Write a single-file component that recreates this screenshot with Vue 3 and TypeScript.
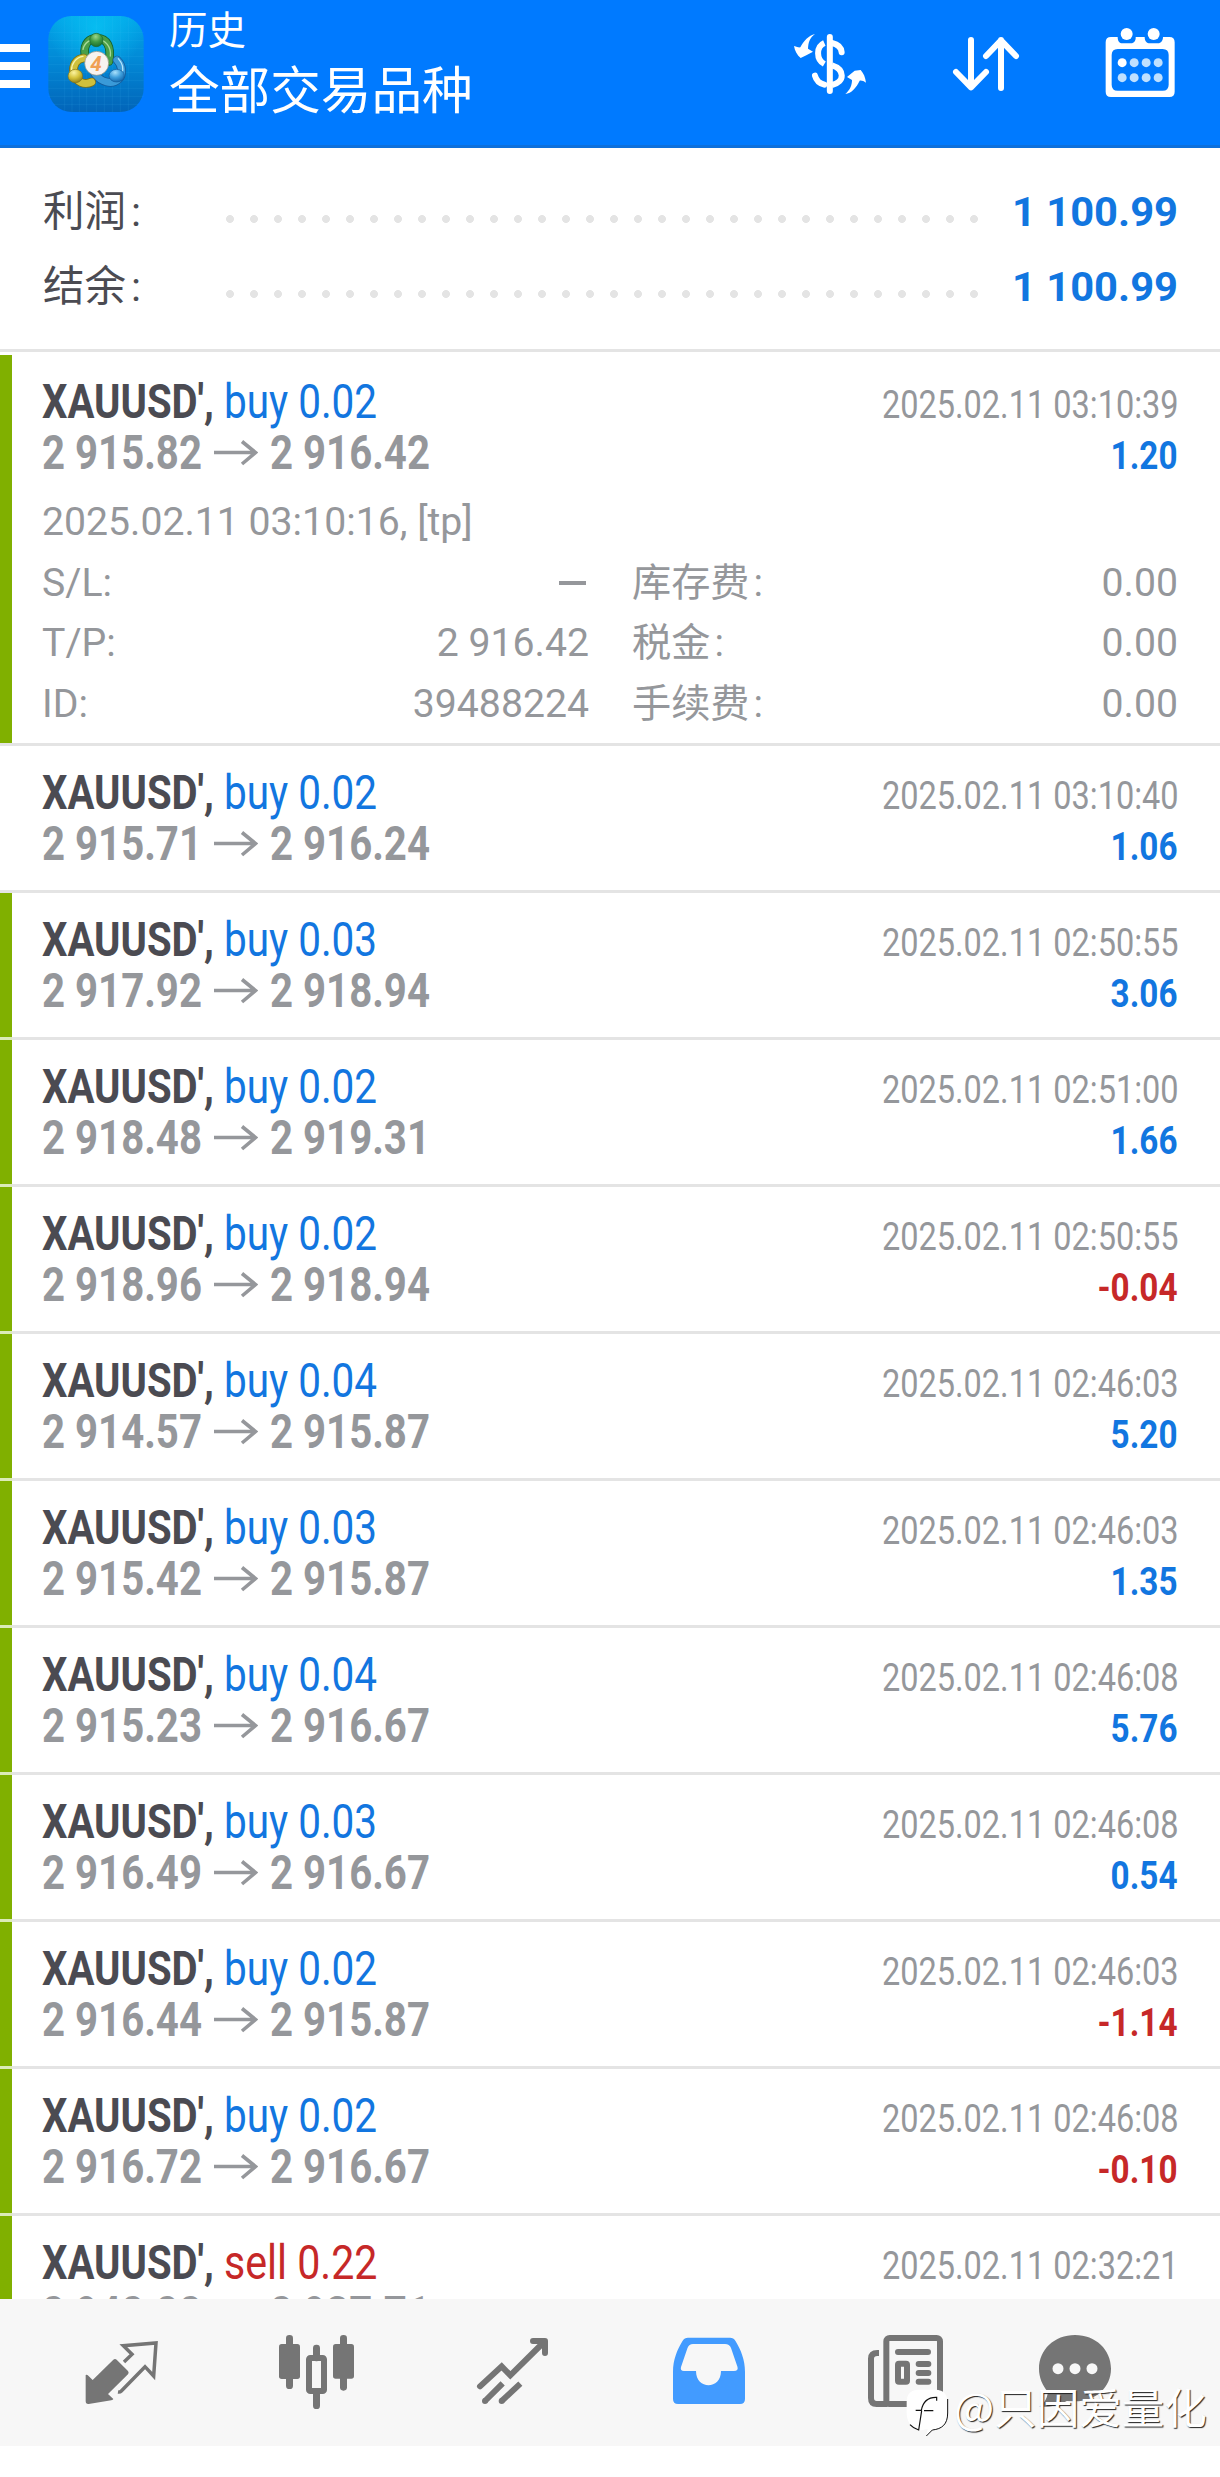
<script setup lang="ts">
interface Deal {
  side: 'buy' | 'sell'
  volume: string
  open: string
  close: string
  time: string
  profit: string
  marked: boolean
  expanded?: boolean
}

const deals: Deal[] = [
  { side: 'buy', volume: '0.02', open: '2 915.82', close: '2 916.42', time: '2025.02.11 03:10:39', profit: '1.20', marked: true, expanded: true },
  { side: 'buy', volume: '0.02', open: '2 915.71', close: '2 916.24', time: '2025.02.11 03:10:40', profit: '1.06', marked: false },
  { side: 'buy', volume: '0.03', open: '2 917.92', close: '2 918.94', time: '2025.02.11 02:50:55', profit: '3.06', marked: true },
  { side: 'buy', volume: '0.02', open: '2 918.48', close: '2 919.31', time: '2025.02.11 02:51:00', profit: '1.66', marked: true },
  { side: 'buy', volume: '0.02', open: '2 918.96', close: '2 918.94', time: '2025.02.11 02:50:55', profit: '-0.04', marked: true },
  { side: 'buy', volume: '0.04', open: '2 914.57', close: '2 915.87', time: '2025.02.11 02:46:03', profit: '5.20', marked: true },
  { side: 'buy', volume: '0.03', open: '2 915.42', close: '2 915.87', time: '2025.02.11 02:46:03', profit: '1.35', marked: true },
  { side: 'buy', volume: '0.04', open: '2 915.23', close: '2 916.67', time: '2025.02.11 02:46:08', profit: '5.76', marked: true },
  { side: 'buy', volume: '0.03', open: '2 916.49', close: '2 916.67', time: '2025.02.11 02:46:08', profit: '0.54', marked: true },
  { side: 'buy', volume: '0.02', open: '2 916.44', close: '2 915.87', time: '2025.02.11 02:46:03', profit: '-1.14', marked: true },
  { side: 'buy', volume: '0.02', open: '2 916.72', close: '2 916.67', time: '2025.02.11 02:46:08', profit: '-0.10', marked: true },
  { side: 'sell', volume: '0.22', open: '2 942.22', close: '2 937.71', time: '2025.02.11 02:32:21', profit: '', marked: true },
]

const summary = [
  { label: '利润', value: '1 100.99' },
  { label: '结余', value: '1 100.99' },
]

const details = [
  [{ label: 'S/L', value: '–' }, { label: '库存费', value: '0.00', cjk: true }],
  [{ label: 'T/P', value: '2 916.42' }, { label: '税金', value: '0.00', cjk: true }],
  [{ label: 'ID', value: '39488224' }, { label: '手续费', value: '0.00', cjk: true }],
]
</script>

<template>
  <div class="screen">
    <header class="bar">
      <div class="menu"><i></i><i></i><i></i></div>
      <svg class="logo" viewBox="53 48 288 288">
        <defs>
          <linearGradient id="bg" x1="0" y1="0" x2="0" y2="1">
            <stop offset="0" stop-color="#02a6e8" /><stop offset=".5" stop-color="#0286d4" /><stop offset="1" stop-color="#0264b8" />
          </linearGradient>
          <radialGradient id="glow" cx=".5" cy=".12" r=".5">
            <stop offset="0" stop-color="#08c4f4" stop-opacity=".8" /><stop offset="1" stop-color="#08c4f4" stop-opacity="0" />
          </radialGradient>
          <radialGradient id="g" cx=".45" cy=".25" r=".8"><stop offset="0" stop-color="#9ad68a" /><stop offset=".5" stop-color="#3f9a45" /><stop offset="1" stop-color="#176a2c" /></radialGradient>
          <radialGradient id="y" cx=".4" cy=".25" r=".8"><stop offset="0" stop-color="#fbf3a0" /><stop offset=".5" stop-color="#d6c43c" /><stop offset="1" stop-color="#8c7c14" /></radialGradient>
          <radialGradient id="b" cx=".4" cy=".25" r=".8"><stop offset="0" stop-color="#a8e0fb" /><stop offset=".5" stop-color="#3f9fdc" /><stop offset="1" stop-color="#0f62a8" /></radialGradient>
        </defs>
        <rect x="54" y="48" width="286" height="288" rx="70" fill="url(#bg)" />
        <rect x="54" y="48" width="286" height="288" rx="70" fill="url(#glow)" />
        <path d="M103 52V332M125 48V336M147 48V336M169 48V336M198 48V336M222 48V336M246 48V336M270 48V336M294 52V332M54 97H340M54 121H340M54 145H340M54 169H340M54 193H340M54 217H340M54 241H340M54 265H340M54 289H340M70 313H324" stroke="#5cd0ff" stroke-opacity=".2" stroke-width="1.5" fill="none" />
        <g stroke-linejoin="round" stroke-linecap="round" fill="none">
          <path d="M164 166C158 128 180 114 200 115C230 115 244 140 236 184" stroke="#14602c" stroke-width="26" />
          <path d="M164 166C158 128 180 114 200 115C230 115 244 140 236 184" stroke="#4a9f48" stroke-width="21" />
          <path d="M158 148C162 128 180 116 200 118C226 118 243 142 240 168" stroke="#a5d999" stroke-width="4" />
          <path d="M260 180C276 196 280 224 264 238C244 256 212 246 194 222" stroke="#145c9c" stroke-width="26" />
          <path d="M260 180C276 196 280 224 264 238C244 256 212 246 194 222" stroke="#3a9ad8" stroke-width="21" />
          <path d="M264 176C278 192 280 210 274 222" stroke="#b4e4fb" stroke-width="4" />
          <path d="M160 174C138 176 126 196 130 220C138 248 164 256 184 246" stroke="#7c7014" stroke-width="26" />
          <path d="M160 174C138 176 126 196 130 220C138 248 164 256 184 246" stroke="#cfc03c" stroke-width="21" />
          <path d="M158 169C136 172 123 192 124 210" stroke="#f8f3ae" stroke-width="4" />
        </g>
        <circle cx="198" cy="120" r="20" fill="url(#g)" stroke="#1b662f" stroke-width="2" />
        <ellipse cx="135" cy="228" rx="22" ry="20" fill="url(#y)" stroke="#80731a" stroke-width="2" />
        <ellipse cx="259" cy="227" rx="23" ry="19" fill="url(#b)" stroke="#145c9c" stroke-width="2" />
        <circle cx="199" cy="190" r="36" fill="#f6f3f0" stroke="#8d8a78" stroke-width="2" />
        <text x="197" y="212" text-anchor="middle" font-family="Roboto, sans-serif" font-size="62" font-weight="700" font-style="italic" fill="#f0a054">4</text>
      </svg>
      <div class="heading">
        <div class="small">历史</div>
        <div class="big">全部交易品种</div>
      </div>
      <div class="actions">
        <svg class="a1" viewBox="90 90 240 210" width="80" height="70">
          <g fill="none" stroke="#fff" stroke-width="18" stroke-linecap="butt">
            <path d="M193 129C168 140 168 178 193 192" />
            <path d="M216 129C234 133 244 144 245 157" stroke-linecap="round" />
            <path d="M216 196C254 208 256 246 216 255" />
            <path d="M193 254C178 250 169 242 165 227" stroke-linecap="round" />
            <path d="M209.500 111V273" stroke-linecap="round" />
          </g>
          <path d="M165 102C149 113 145 128 144 146L159 155L139 166L122 174C112 166 104 152 102 138C111 141 116 143 121 142C131 123 146 106 165 102Z" fill="#fff" />
          <path d="M256 282C270 270 276 256 276 240L261 231L284 212L302 210C311 220 316 232 318 248C311 243 305 241 299 242C289 263 274 280 256 282Z" fill="#fff" />
        </svg>
        <svg class="a2" viewBox="570 90 216 210" width="72" height="70">
          <path d="M633 120V262M588 216L633 262L678 216M723 264V120M678 168L723 121L768 168" fill="none" stroke="#fff" stroke-width="18" stroke-linecap="round" stroke-linejoin="round" />
        </svg>
        <svg class="a3" viewBox="1030 75 222 225" width="74" height="75">
          <path fill-rule="evenodd" d="M1054 111H1074C1074 124 1080 130 1088 130H1114C1123 130 1129 122 1128 111H1155C1155 124 1162 130 1170 130H1195C1204 130 1210 122 1210 111H1229Q1245 111 1245 127V275Q1245 291 1229 291H1054Q1038 291 1038 275V127Q1038 111 1054 111ZM1074 147Q1056 147 1056 165V254Q1056 272 1074 272H1209Q1227 272 1227 254V165Q1227 147 1209 147Z" fill="#fff" />
          <circle cx="1101" cy="102" r="18" fill="#fff" /><circle cx="1182" cy="102" r="18" fill="#fff" />
          <circle cx="1087.500" cy="188" r="13.500" fill="#fff" />
          <g fill="#bfe0ff"><circle v-for="x in [1123.5, 1159.5, 1195.5]" :key="x" :cx="x" cy="188" r="13.500" /><circle v-for="x in [1087.5, 1123.5, 1159.5, 1195.5]" :key="'b' + x" :cx="x" cy="233" r="13.500" /></g>
        </svg>
      </div>
    </header>

    <section class="summary">
      <div v-for="s in summary" :key="s.label" class="sum-row">
        <span class="sum-label">{{ s.label }}<b class="colon">:</b></span>
        <span class="dots"></span>
        <span class="sum-value">{{ s.value }}</span>
      </div>
    </section>

    <main class="list">
      <article v-for="(d, i) in deals" :key="i" class="deal" :class="{ marked: d.marked, first: i === 0, after: i > 0 && d.marked && deals[i - 1].marked }">
        <div class="rule"></div>
        <div class="body">
          <div class="top">
            <div class="left">
              <div class="line"><span class="symbol"><span class="sq-symbol">XAUUSD',</span></span><span class="side" :class="d.side">{{ d.side }} {{ d.volume }}</span></div>
              <div class="line price">
                <span class="open"><span class="sq-price">{{ d.open }}</span></span>
                <svg class="arrow" viewBox="0 0 44 26" width="44" height="26"><path d="M0 12.500H41M28 1.500L41.500 12.500L28 24" fill="none" stroke="#95979b" stroke-width="3.600" /></svg>
                <span class="sq-price">{{ d.close }}</span>
              </div>
            </div>
            <div class="right">
              <div class="time">{{ d.time }}</div>
              <div v-if="d.profit" class="profit" :class="{ loss: d.profit.startsWith('-') }">{{ d.profit }}</div>
            </div>
          </div>
          <div v-if="d.expanded" class="details">
            <div class="detail-time">2025.02.11 03:10:16, [tp]</div>
            <div v-for="(r, k) in details" :key="k" class="detail-row">
              <div v-for="c in r" :key="c.label" class="cell">
                <span class="lab" :class="{ cjk: c.cjk }">{{ c.label }}<i>:</i></span>
                <span v-if="c.value === '–'" class="dash"></span>
                <span v-else class="val">{{ c.value }}</span>
              </div>
            </div>
          </div>
        </div>
      </article>
    </main>

    <nav class="tabs">
      <span><svg viewBox="60 60 252 252">
        <path d="M160 149Q165 145 170 149L204 183Q208 188 204 193L144 252L160 267Q159 270 154 271L86 282Q77 283 77 273V195Q81 193 85 197L98 210Z" fill="#757575" />
        <path d="M192 156L216 133L190 107L288 99L281 198L255 170L184 243Q180 247 174 246" fill="none" stroke="#757575" stroke-width="10.500" />
      </svg></span>
      <span><svg viewBox="648 60 252 252" fill="#757575">
        <rect x="678" y="75" width="21" height="162" rx="10" /><rect x="657" y="102" width="63" height="105" rx="8" />
        <rect x="840" y="75" width="21" height="167" rx="10" /><rect x="819" y="102" width="63" height="104" rx="8" />
        <rect x="759" y="104" width="21" height="50" rx="10" /><rect x="759" y="240" width="21" height="57" rx="10" />
        <rect x="747" y="144" width="45" height="99" rx="4" fill="none" stroke="#757575" stroke-width="18" />
      </svg></span>
      <span><svg viewBox="1236 60 252 252">
        <path d="M1260 229L1325 169L1351 196L1452 96" fill="none" stroke="#757575" stroke-width="18" stroke-linecap="round" stroke-linejoin="miter" />
        <path d="M1419 93H1455V129" fill="none" stroke="#757575" stroke-width="18" stroke-linecap="round" stroke-linejoin="round" />
        <path d="M1275 273L1328 220M1325 273L1381 221" fill="none" stroke="#757575" stroke-width="18" />
        <circle cx="1275" cy="273" r="9" fill="#757575" /><circle cx="1325" cy="273" r="9" fill="#757575" />
      </svg></span>
      <span><svg viewBox="668 2330 84 84">
        <path fill-rule="evenodd" d="M688 2337.700H730Q733.500 2337.700 735.500 2341C741 2350 745 2360 745 2372V2399Q745 2404 740 2404H678Q673 2404 673 2399V2372C673 2360 677 2350 682.500 2341Q684.500 2337.700 688 2337.700ZM693 2344Q689 2344 687.500 2348L681 2367Q680 2371 684 2371H696C696 2390 721 2390 721 2371H734Q738.500 2371 737.500 2367L731 2348Q729.500 2344 725 2344Z" fill="#429bff" />
      </svg></span>
      <span><svg viewBox="42 60 252 252" fill="none" stroke="#757575" stroke-width="18">
        <rect x="109" y="84" width="161" height="198" rx="10" />
        <path d="M87 129H82Q63 129 63 146V264Q63 282 80 282H112" />
        <path d="M144 126H234M206 162H235M206 189H235M206 215H235" stroke-linecap="round" />
        <rect x="144" y="161" width="27" height="54" rx="3" />
      </svg></span>
      <span class="last"><svg viewBox="549 60 252 252">
        <path d="M675 75C737 75 783 119 783 176C783 232 737 274 675 274L650 273C625 288 596 292 568 290C582 280 590 270 594 246C577 226 567 202 567 176C567 119 613 75 675 75Z" fill="#757575" />
        <circle cx="624" cy="176" r="16.500" fill="#f7f7f7" /><circle cx="675" cy="176" r="16.500" fill="#f7f7f7" /><circle cx="726" cy="176" r="16.500" fill="#f7f7f7" />
      </svg></span>
    </nav>

    <div class="watermark">
      <svg viewBox="165 235 135 150" width="45" height="50">
        <path d="M206 363C188 356 171 340 170 312V276C170 252 184 240 206 240H256C282 240 293 256 293 280V310C293 344 276 358 247 361L229 379L233 358Z" fill="#fff" />
        <path d="M293 268V310C293 344 276 358 247 361L229 379" fill="none" stroke="#111" stroke-width="3" />
        <path d="M180 345Q190 356 206 361L215 303M197 302H214C218 280 228 262 260 263V273M222 303H250" fill="none" stroke="#111" stroke-width="3.500" />
      </svg>
      <span>@只因爱量化</span>
    </div>
  </div>
</template>

<style>
body { background: #fff; }
</style>

<style scoped>
.screen { position: relative; width: 1220px; height: 2477px; overflow: hidden; background: #fff; font-family: Roboto, "Noto Sans CJK SC", sans-serif; color: #4b4b52; display: flex; flex-direction: column; }
.bar { box-sizing: border-box; height: 148px; flex: none; background: #007aff; border-bottom: 3px solid #0d70dc; display: flex; align-items: flex-start; color: #fff; }
.menu { width: 30px; margin: 44px 18px 0 0; display: flex; flex-direction: column; gap: 10px; }
.menu i { height: 8px; background: #fff; }
.logo { width: 96px; height: 96px; margin-top: 16px; flex: none; }
.heading { margin: 7px 0 0 25px; font-family: "Noto Sans CJK SC", sans-serif; width: 400px; white-space: nowrap; }
.small { font-size: 38.500px; line-height: 40px; }
.big { font-size: 50.600px; line-height: 60px; margin-top: 10px; }
.actions { display: flex; }
.a1 { margin: 30px 0 0 221px; }
.a2 { margin: 30px 0 0 80px; }
.a3 { margin: 25px 0 0 81px; }

.summary { box-sizing: border-box; height: 204px; flex: none; border-bottom: 3px solid #e4e4e4; padding: 26px 42px 0 43px; }
.sum-row { height: 75px; line-height: 75px; font-size: 41.500px; display: flex; }
.sum-label { width: 175px; }
.colon { font-weight: 400; margin-left: 5px; }
.dots { width: 768px; background: radial-gradient(circle at 12px 45px, #e4e4e4 3.600px, transparent 4.300px) 0 0 / 24px 75px repeat-x; }
.sum-value { flex: 1; display: flex; justify-content: flex-end; font-weight: 700; color: #1276e0; transform: scaleX(1.005); transform-origin: 100% 50%; white-space: nowrap; }

.list { height: 1947px; flex: none; overflow: hidden; }
.rule { height: 3px; background: #e4e4e4; }
.after .rule { background: linear-gradient(to right, #dcebb8 12px, #e4e4e4 12px); }
.first .rule { background: #fff; }
.body { box-sizing: border-box; height: 144px; border-left: 12px solid transparent; padding: 0 41px 0 30px; }
.marked .body { border-left-color: #80b000; }
.first .body { height: 388px; }
.top { display: flex; justify-content: space-between; height: 137px; }
.left { padding-top: 21px; font-size: 48px; line-height: 51px; white-space: nowrap; }
.line { display: flex; height: 51px; }
.symbol { width: 182px; font-weight: 700; }
.sq-symbol { display: inline-block; transform: scaleX(.835); transform-origin: 0 50%; }
.side { display: inline-block; transform: scaleX(.843); transform-origin: 0 50%; color: #1276e0; }
.side.sell { color: #c62828; transform: scaleX(.857); }
.price { font-weight: 700; color: #95979b; }
.open { width: 172px; }
.sq-price { display: inline-block; transform: scaleX(.837); transform-origin: 0 50%; }
.arrow { margin: 13px 12px 0 0; flex: none; }
.right { padding-top: 24px; font-size: 39.400px; line-height: 51px; text-align: right; white-space: nowrap; color: #95979b; }
.time, .profit { transform: scaleX(.825); transform-origin: 100% 50%; }
.profit { font-weight: 700; color: #1276e0; margin-right: 1px; transform: scaleX(.845); }
.profit.loss { color: #c62828; }

.details { font-size: 39.200px; line-height: 60.700px; color: #95979b; white-space: nowrap; }
.detail-row { display: flex; gap: 43px; height: 60.700px; }
.cell { width: 547px; display: flex; justify-content: space-between; }
.cell:last-child { width: 546px; }
.lab i { font-style: normal; }
.cjk i { margin-left: 4px; }
.dash { width: 27px; height: 4px; margin: 28px 3px 0 0; background: #95979b; }

.tabs { height: 147px; flex: none; background: #f7f7f7; display: flex; padding-left: 24px; }
.tabs span { width: 196px; padding-top: 31px; box-sizing: border-box; display: flex; justify-content: center; align-items: flex-start; }
.tabs .last { width: 142px; }
.tabs svg { width: 84px; height: 84px; flex: none; }

.watermark { position: absolute; left: 905px; top: 2388px; display: flex; color: #fff; font: 42.500px/44px "Noto Sans CJK SC", sans-serif; white-space: nowrap; text-shadow: 1px 1px 1px #222; }
.watermark svg { margin-right: 4px; }
.watermark span { margin-top: -4px; }
</style>
